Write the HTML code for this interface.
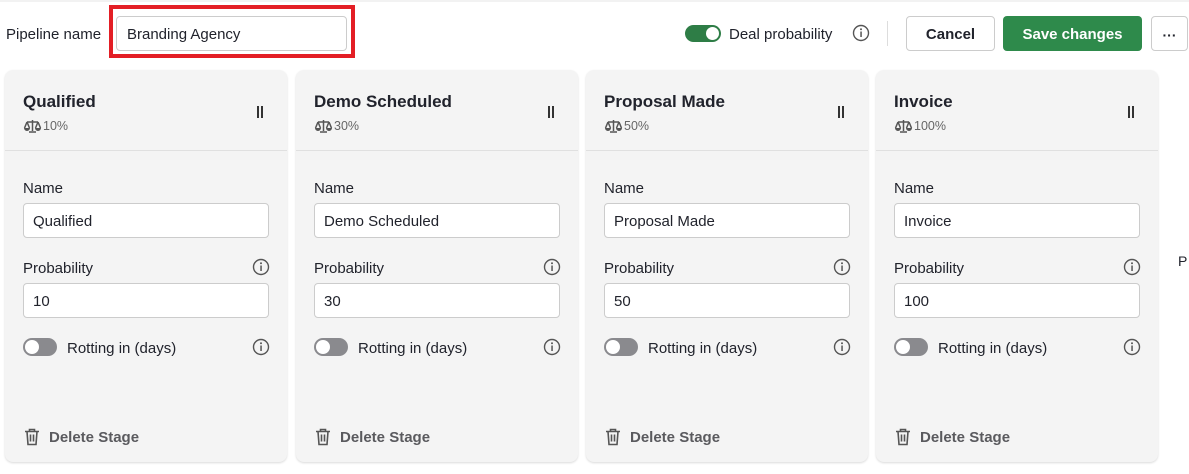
<!DOCTYPE html>
<html><head><style>
*{box-sizing:border-box;margin:0;padding:0}
body{width:1189px;height:474px;background:#fff;font-family:"Liberation Sans",sans-serif;color:#21232c;position:relative;overflow:hidden}
.topline{position:absolute;left:0;right:0;top:0;height:2px;background:#f2f2f2}
.abs{position:absolute}
.lbl{font-size:15px;color:#21232c}
.inp{position:absolute;background:#fff;border:1px solid #ccc;border-radius:4px;font-size:15px;padding-left:9px;padding-top:2px;display:flex;align-items:center;color:#21232c}
.card{position:absolute;top:70px;width:282px;height:392px;background:#f4f4f4;border-radius:8px;box-shadow:0 1px 2px rgba(0,0,0,.15)}
.card .div{position:absolute;left:0;right:0;top:80px;height:1px;background:#e0e0e0}
.title{position:absolute;left:18px;top:22px;font-size:17px;font-weight:bold}
.pct{position:absolute;left:18px;top:49px;font-size:12.5px;color:#666;display:flex;align-items:center;gap:1px}
.drag{position:absolute;left:252px;top:36px;width:6px;height:12px;border-left:2px solid #333;border-right:2px solid #333}
.tog{position:absolute;width:34px;height:18px;border-radius:9px;background:#8a8a8e}
.tog::after{content:"";position:absolute;left:2px;top:2px;width:14px;height:14px;border-radius:50%;background:#fff}
.btn{position:absolute;top:16px;height:35px;border-radius:4px;font-size:15px;font-weight:bold;display:flex;align-items:center;justify-content:center;padding-top:2px}
</style></head><body>
<div class="topline"></div>
<div class="abs lbl" style="left:6px;top:26px">Pipeline name</div>
<div class="abs" style="left:109px;top:5px;width:246px;height:53px;border:4px solid #e31e25"></div>
<div class="inp" style="left:116px;top:16px;width:231px;height:35px;padding-left:10px">Branding Agency</div>

<div class="abs" style="left:685px;top:25px;width:36px;height:17px;border-radius:9px;background:#2e7d46"><div style="position:absolute;right:2px;top:2px;width:13px;height:13px;border-radius:50%;background:#fff"></div></div>
<div class="abs lbl" style="left:729px;top:26px">Deal probability</div>
<svg class="abs" style="left:852px;top:24px" width="18" height="18" viewBox="0 0 18 18"><circle cx="9" cy="9" r="7.5" fill="none" stroke="#555" stroke-width="1.4"/><rect x="8.3" y="7.5" width="1.5" height="5.5" fill="#555"/><circle cx="9" cy="5.3" r="1" fill="#555"/></svg>
<div class="abs" style="left:887px;top:21px;width:1px;height:25px;background:#ddd"></div>
<div class="btn" style="left:906px;width:89px;border:1px solid #ccc;color:#21232c">Cancel</div>
<div class="btn" style="left:1003px;width:139px;background:#2e8a4b;color:#fff">Save changes</div>
<div class="btn" style="left:1151px;width:37px;border:1px solid #ccc;color:#21232c;font-size:14px">···</div>

<div id="cards"></div>
<div class="abs" style="left:1178px;top:253px;font-size:14px">P</div>

<script>
const d=[["Qualified","10",5],["Demo Scheduled","30",296],["Proposal Made","50",586],["Invoice","100",876]];
const info='<svg width="18" height="18" viewBox="0 0 18 18"><circle cx="9" cy="9" r="7.5" fill="none" stroke="#555" stroke-width="1.4"/><rect x="8.3" y="7.5" width="1.5" height="5.5" fill="#555"/><circle cx="9" cy="5.3" r="1" fill="#555"/></svg>';
const scale='<svg width="19" height="14" viewBox="0 0 19 14"><path d="M9.5 1v11M4 3h11M4 3L1.5 9M4 3l2.5 6M15 3l-2.5 6M15 3l2.5 6" stroke="#555" stroke-width="1.5" fill="none"/><path d="M1 9h6a3 3 0 0 1-6 0zM12 9h6a3 3 0 0 1-6 0z" fill="#555"/><path d="M6 13h7" stroke="#555" stroke-width="1.5"/></svg>';
const trash='<svg width="16" height="18" viewBox="0 0 16 18"><path d="M1 3.5h14M5.5 3.5V1.5h5v2M3 3.5l1 13h8l1-13M6.5 6.5v7M9.5 6.5v7" stroke="#555" stroke-width="1.6" fill="none"/></svg>';
let h='';
for(const [t,p,x] of d){
h+=`<div class="card" style="left:${x}px"><div class="title">${t}</div><div class="pct">${scale}${p}%</div><div class="drag"></div><div class="div"></div>
<div class="abs lbl" style="left:18px;top:110px">Name</div>
<div class="inp" style="left:18px;top:133px;width:246px;height:35px">${t}</div>
<div class="abs lbl" style="left:18px;top:190px">Probability</div>
<div class="abs" style="left:247px;top:188px">${info}</div>
<div class="inp" style="left:18px;top:213px;width:246px;height:35px">${p}</div>
<div class="tog" style="left:18px;top:268px"></div>
<div class="abs lbl" style="left:62px;top:270px">Rotting in (days)</div>
<div class="abs" style="left:247px;top:268px">${info}</div>
<div class="abs" style="left:19px;top:358px">${trash}</div>
<div class="abs" style="left:44px;top:359px;font-size:15px;font-weight:bold;color:#5a5a5e">Delete Stage</div>
</div>`;}
document.getElementById('cards').innerHTML=h;
</script>
</body></html>
